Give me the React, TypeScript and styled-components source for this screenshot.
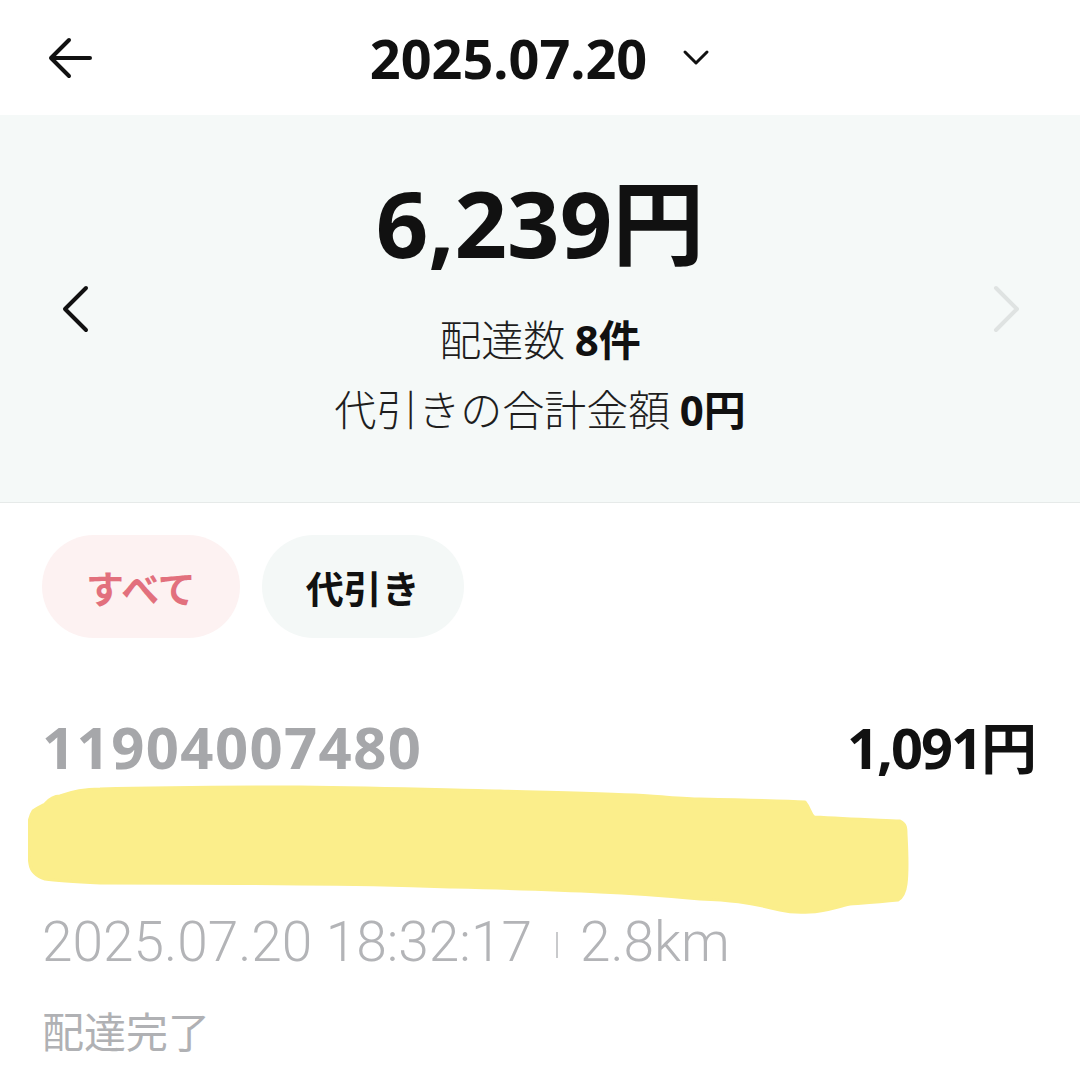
import React from "react";
import styled, { createGlobalStyle } from "styled-components";

const Global = createGlobalStyle`
  html, body { margin: 0; padding: 0; background: #ffffff; }
  body { font-family: "Noto Sans", "Noto Sans CJK JP", sans-serif; color: #111; }
  * { box-sizing: border-box; }
`;

const Page = styled.div`
  width: 1080px;
  height: 1080px;
  overflow: hidden;
  background: #ffffff;
`;

const Header = styled.header`
  height: 115px;
  display: grid;
  grid-template-columns: 1fr auto 1fr;
  align-items: center;
  padding-left: 47px;
`;

const IconButton = styled.button`
  border: 0;
  background: none;
  padding: 0;
  display: flex;
  align-items: center;
  justify-self: start;
  color: #111;
`;

const TitleGroup = styled.div`
  display: flex;
  align-items: center;
  gap: 35px;
  margin-left: -47px;
`;

const Title = styled.h1`
  margin: 0;
  font-family: "Noto Sans", "Noto Sans CJK JP", sans-serif;
  font-weight: 700;
  font-size: 54px;
  line-height: 1;
  color: #111;
`;

const Summary = styled.section`
  height: 388px;
  background: #f5f9f8;
  border-bottom: 1px solid #e6eae9;
  display: grid;
  grid-template-columns: 130px 1fr 130px;
  align-items: center;
`;

const SideNav = styled.div<{ $side: "left" | "right" }>`
  display: flex;
  justify-content: ${(p) => (p.$side === "left" ? "flex-start" : "flex-end")};
  padding: ${(p) => (p.$side === "left" ? "0 0 0 60px" : "0 58px 0 0")};
  color: ${(p) => (p.$side === "left" ? "#111" : "#dfe3e2")};
`;

const SummaryBody = styled.div`
  display: flex;
  flex-direction: column;
  align-items: center;
  padding-top: 4px;
`;

const Total = styled.div`
  font-family: "Noto Sans", "Noto Sans CJK JP", sans-serif;
  font-weight: 700;
  font-size: 92px;
  line-height: 1;
  color: #111;
  margin-bottom: 35px;
`;

const InfoLine = styled.div`
  font-family: "Noto Sans CJK JP", sans-serif;
  font-weight: 300;
  font-size: 42px;
  line-height: 68px;
  color: #1e1e1e;
  white-space: nowrap;
`;

const Strong = styled.b`
  font-family: "Noto Sans", "Noto Sans CJK JP", sans-serif;
  font-weight: 700;
  color: #111;
`;

const ChipRow = styled.div`
  display: flex;
  gap: 22px;
  padding: 32px 0 0 42px;
`;

const Chip = styled.button<{ $active?: boolean }>`
  height: 103px;
  padding: 0 44px;
  border: 0;
  border-radius: 52px;
  background: ${(p) => (p.$active ? "#fdf2f2" : "#f4f8f7")};
  color: ${(p) => (p.$active ? "#e2707d" : "#111")};
  font-family: "Noto Sans CJK JP", sans-serif;
  font-weight: 700;
  font-size: 38px;
  line-height: 1;
`;

const Item = styled.article`
  padding: 80px 45px 0 42px;
`;

const ItemTop = styled.div`
  display: flex;
  justify-content: space-between;
  align-items: baseline;
`;

const OrderId = styled.div`
  font-family: "Noto Sans", sans-serif;
  font-weight: 700;
  font-size: 58px;
  line-height: 1;
  letter-spacing: 1.4px;
  color: #a6a7aa;
`;

const Price = styled.div`
  font-family: "Noto Sans", "Noto Sans CJK JP", sans-serif;
  font-weight: 700;
  font-size: 56px;
  line-height: 1;
  letter-spacing: -2px;
  color: #111;
`;

const Highlight = styled.svg`
  display: block;
  margin: 8px 0 0 -14px;
`;

const Meta = styled.div`
  display: flex;
  align-items: center;
  font-family: Roboto, "Noto Sans", sans-serif;
  font-weight: 300;
  font-size: 55px;
  line-height: 53px;
  color: #b3b4b7;
  white-space: nowrap;
`;

const Divider = styled.span`
  display: inline-block;
  width: 2px;
  height: 26px;
  background: #c9cacc;
  margin: 4px 22px 0 24px;
`;

const Status = styled.div`
  margin-top: 40px;
  font-family: "Noto Sans CJK JP", sans-serif;
  font-weight: 400;
  font-size: 42px;
  line-height: 42px;
  color: #b0b1b4;
`;

const Back = () => (
  <svg width="46" height="42" viewBox="0 0 46 42" fill="none">
    <path d="M43 21H4M22 3L4 21l18 18" stroke="currentColor" strokeWidth="4" strokeLinecap="round" strokeLinejoin="round" />
  </svg>
);

const ChevronDown = () => (
  <svg width="28" height="18" viewBox="0 0 28 18" fill="none">
    <path d="M3 3l11 11L25 3" stroke="#111" strokeWidth="3" strokeLinecap="round" strokeLinejoin="round" />
  </svg>
);

const Chevron = ({ dir }: { dir: "left" | "right" }) => (
  <svg width="30" height="50" viewBox="0 0 30 50" fill="none">
    <path
      d={dir === "left" ? "M26 4L5 25l21 21" : "M4 4l21 21L4 46"}
      stroke="currentColor"
      strokeWidth="4"
      strokeLinecap="round"
      strokeLinejoin="round"
    />
  </svg>
);

const Marker = () => (
  <Highlight width="884" height="132" viewBox="0 0 884 132">
    <path
      d="M17 20 C22 14 28 12 32 12 C45 7 60 5 72 5 C150 3 220 3 272 3 C360 4 420 6 472 7 C540 9 590 10 622 12 C650 14 660 15 672 15 C720 16 760 17 777 18 C782 24 782 30 786 33 C820 35 850 36 872 37 C878 40 878 44 878 50 C879 70 880 85 878 100 C877 108 875 113 870 116 C850 118 835 119 822 120 C805 124 795 128 782 128 C768 129 760 128 752 126 C720 118 700 116 672 115 C640 112 600 109 572 108 C520 105 470 104 422 103 C370 101 320 100 272 100 C200 99 130 99 72 99 C50 98 30 97 17 95 C8 92 3 87 2 80 C0 68 0 55 0 45 C1 35 3 30 5 27 C9 24 13 22 17 20 Z"
      fill="#fbee8b"
      stroke="#fbee8b"
      strokeWidth="3"
      strokeLinejoin="round"
    />
  </Highlight>
);

export default function App() {
  return (
    <Page>
      <Global />
      <Header>
        <IconButton aria-label="戻る">
          <Back />
        </IconButton>
        <TitleGroup>
          <Title>2025.07.20</Title>
          <ChevronDown />
        </TitleGroup>
        <div />
      </Header>

      <Summary>
        <SideNav $side="left">
          <Chevron dir="left" />
        </SideNav>
        <SummaryBody>
          <Total>6,239円</Total>
          <InfoLine>
            配達数 <Strong>8件</Strong>
          </InfoLine>
          <InfoLine>
            代引きの合計金額 <Strong>0円</Strong>
          </InfoLine>
        </SummaryBody>
        <SideNav $side="right">
          <Chevron dir="right" />
        </SideNav>
      </Summary>

      <ChipRow>
        <Chip $active>すべて</Chip>
        <Chip>代引き</Chip>
      </ChipRow>

      <Item>
        <ItemTop>
          <OrderId>11904007480</OrderId>
          <Price>1,091円</Price>
        </ItemTop>
        <Marker />
        <Meta>
          2025.07.20 18:32:17
          <Divider />
          2.8km
        </Meta>
        <Status>配達完了</Status>
      </Item>
    </Page>
  );
}
